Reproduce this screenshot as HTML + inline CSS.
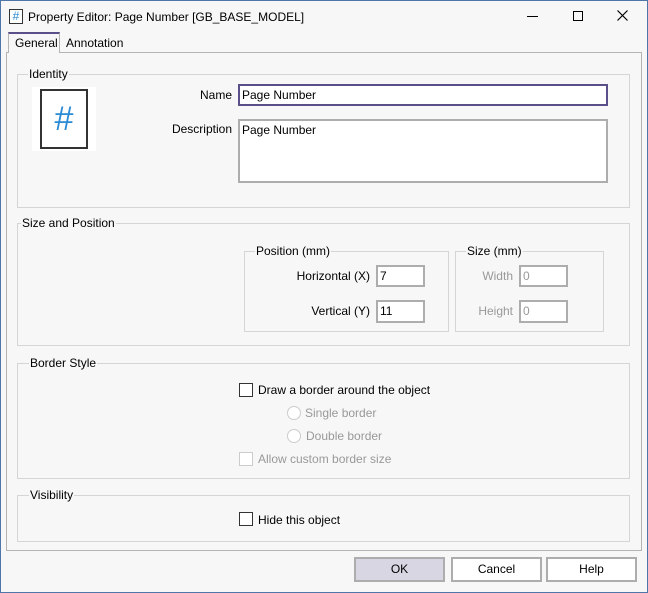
<!DOCTYPE html>
<html><head><style>
*{box-sizing:border-box;margin:0;padding:0}
body{width:648px;height:593px;background:#f7f7f7;font-family:"Liberation Sans",sans-serif;font-size:12px;color:#000;position:relative;overflow:hidden}
.a{position:absolute}
.win{left:0;top:0;width:648px;height:593px;border:1px solid #4f76a8}
.grp{position:absolute;border:1px solid #d5d5d5}
.lbl{position:absolute;background:#f7f7f7;padding:0 1px;line-height:14px}
.inp{position:absolute;background:#fff;border:2px solid #adadad;padding:2px 2px 0;line-height:15px}
.cb{position:absolute;width:14px;height:14px;border:1px solid #333;background:#fff}
.rd{position:absolute;width:14px;height:14px;border:1px solid #ccc;border-radius:50%;background:#fff}
.btn{position:absolute;height:25px;border:2px solid #adadad;background:#fff;text-align:center;line-height:21px}
.r{text-align:right}
.dis{color:#999}
</style></head><body>
<div class="a win"></div>
<div class="a" style="left:9px;top:9px;width:14px;height:15px;border:1px solid #333;background:#fff;color:#2a8ad4;font-size:12px;line-height:13px;text-align:center">#</div>
<div class="a" style="left:28px;top:10px;line-height:15px">Property Editor: Page Number [GB_BASE_MODEL]</div>
<div class="a" style="left:527px;top:16px;width:11px;height:1px;background:#000"></div>
<div class="a" style="left:573px;top:11px;width:10px;height:10px;border:1px solid #000"></div>
<svg class="a" style="left:617px;top:10px" width="11" height="11"><path d="M0.5 0.5L10.5 10.5M10.5 0.5L0.5 10.5" stroke="#000" stroke-width="1.2"/></svg>
<!-- tabs -->
<div class="a" style="left:6px;top:52px;width:636px;height:499px;border:1px solid #b4b4b4"></div>
<div class="a" style="left:8px;top:32px;width:52px;height:21px;border:1px solid #b4b4b4;border-bottom:none;border-top:2px solid #5b4f8a;background:#f7f7f7;padding-left:6px;line-height:18px">General</div>
<div class="a" style="left:66px;top:36px;line-height:15px">Annotation</div>
<!-- Identity -->
<div class="grp" style="left:17px;top:74px;width:613px;height:134px"></div>
<div class="lbl" style="left:28px;top:67px">Identity</div>
<div class="a" style="left:32px;top:87px;width:64px;height:64px;background:#fff"></div>
<div class="a" style="left:40px;top:89px;width:48px;height:60px;border:2px solid #333;color:#2a8ad4;font-size:34px;text-align:center;line-height:56px">#</div>
<div class="a r" style="left:150px;top:88px;width:82px">Name</div>
<div class="inp" style="left:238px;top:84px;width:370px;height:22px;border-color:#5b4f8a">Page Number</div>
<div class="a r" style="left:150px;top:122px;width:82px">Description</div>
<div class="inp" style="left:238px;top:119px;width:370px;height:64px">Page Number</div>
<!-- Size and position -->
<div class="grp" style="left:17px;top:223px;width:613px;height:123px"></div>
<div class="lbl" style="left:21px;top:216px">Size and Position</div>
<div class="grp" style="left:244px;top:251px;width:205px;height:81px"></div>
<div class="lbl" style="left:255px;top:244px">Position (mm)</div>
<div class="a r" style="left:280px;top:269px;width:90px">Horizontal (X)</div>
<div class="inp" style="left:376px;top:265px;width:49px;height:22px">7</div>
<div class="a r" style="left:280px;top:304px;width:90px">Vertical (Y)</div>
<div class="inp" style="left:376px;top:300px;width:49px;height:23px">11</div>
<div class="grp" style="left:455px;top:251px;width:149px;height:81px"></div>
<div class="lbl" style="left:466px;top:244px">Size (mm)</div>
<div class="a r dis" style="left:460px;top:269px;width:53px">Width</div>
<div class="inp dis" style="left:519px;top:265px;width:49px;height:22px">0</div>
<div class="a r dis" style="left:460px;top:304px;width:53px">Height</div>
<div class="inp dis" style="left:519px;top:300px;width:49px;height:23px">0</div>
<!-- Border style -->
<div class="grp" style="left:17px;top:363px;width:613px;height:116px"></div>
<div class="lbl" style="left:29px;top:356px">Border Style</div>
<div class="cb" style="left:239px;top:383px"></div>
<div class="a" style="left:258px;top:383px">Draw a border around the object</div>
<div class="rd" style="left:287px;top:406px"></div>
<div class="a dis" style="left:305px;top:406px">Single border</div>
<div class="rd" style="left:287px;top:429px"></div>
<div class="a dis" style="left:306px;top:429px">Double border</div>
<div class="cb" style="left:239px;top:452px;border-color:#ccc"></div>
<div class="a dis" style="left:258px;top:452px">Allow custom border size</div>
<!-- Visibility -->
<div class="grp" style="left:17px;top:495px;width:613px;height:47px"></div>
<div class="lbl" style="left:29px;top:488px">Visibility</div>
<div class="cb" style="left:239px;top:512px"></div>
<div class="a" style="left:258px;top:513px">Hide this object</div>
<!-- buttons -->
<div class="btn" style="left:354px;top:557px;width:91px;background:#d8d6e2">OK</div>
<div class="btn" style="left:451px;top:557px;width:91px">Cancel</div>
<div class="btn" style="left:546px;top:557px;width:91px">Help</div>
</body></html>
